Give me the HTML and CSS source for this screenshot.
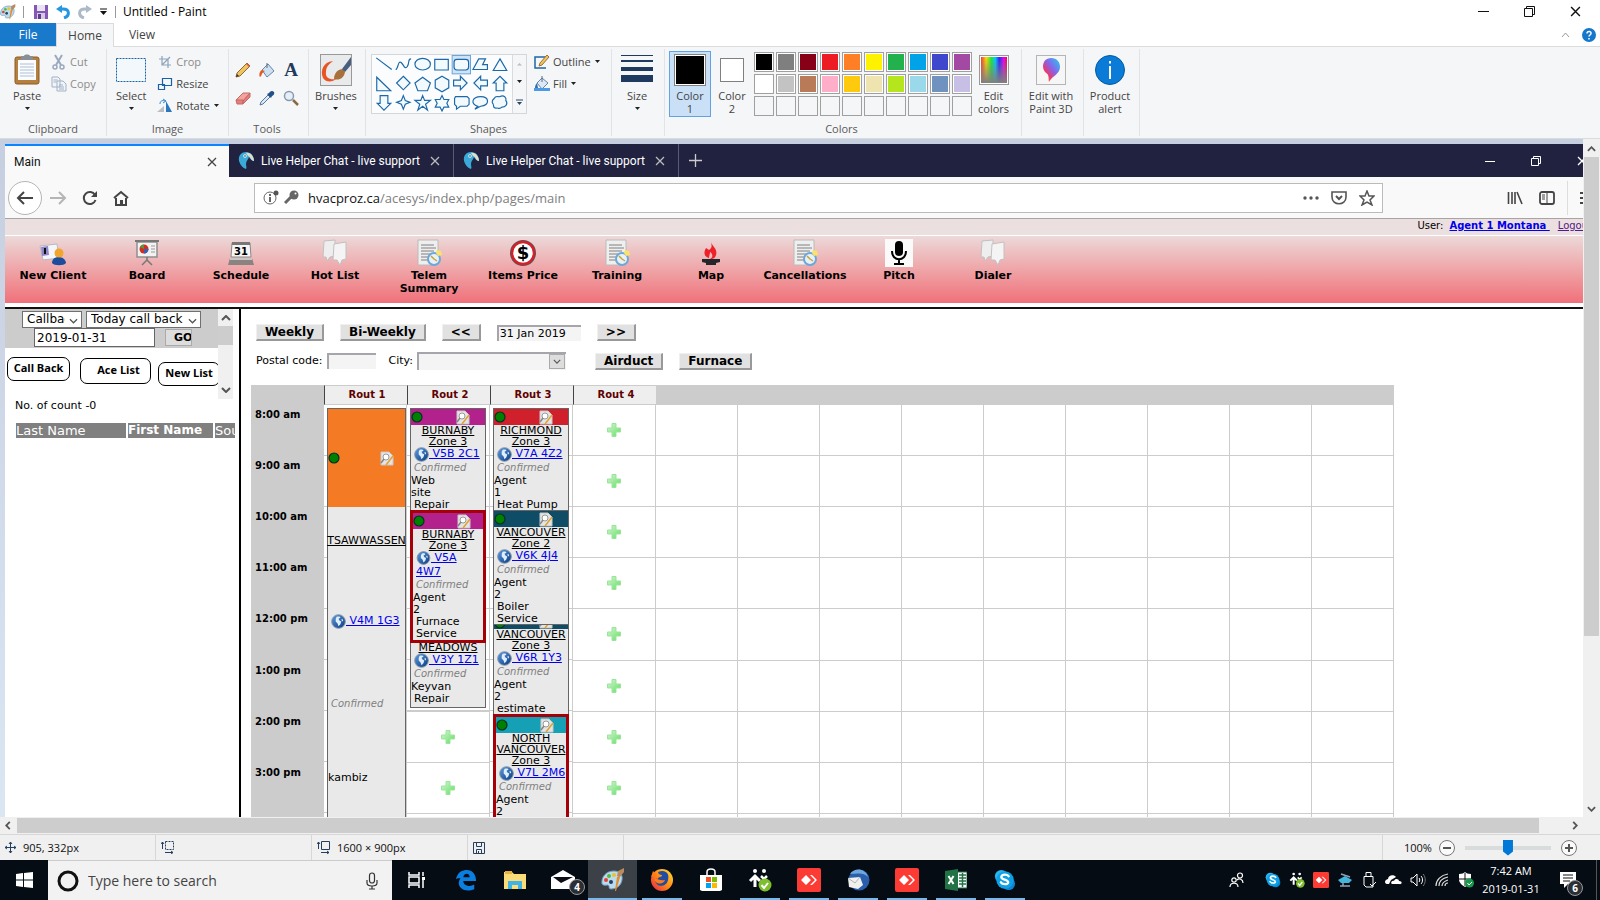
FILE: index.html
```html
<!DOCTYPE html>
<html lang="en">
<head>
<meta charset="utf-8">
<title>Untitled - Paint</title>
<link rel="stylesheet" href="styles.css">
</head>
<body>
<svg class="defs" aria-hidden="true">
  <defs>
    <linearGradient id="gGlobe" x1="0" y1="0" x2="1" y2="1"><stop offset="0" stop-color="#5b9be0"/><stop offset="1" stop-color="#0b3a80"/></linearGradient>
    <linearGradient id="gPlus" x1="0" y1="0" x2="1" y2="1"><stop offset="0" stop-color="#d5f5d5"/><stop offset="1" stop-color="#62df62"/></linearGradient>
    <linearGradient id="gRain"><stop offset="0" stop-color="#f33"/><stop offset=".2" stop-color="#fd0"/><stop offset=".4" stop-color="#1e3"/><stop offset=".55" stop-color="#0cf"/><stop offset=".7" stop-color="#22f"/><stop offset=".88" stop-color="#e0e"/><stop offset="1" stop-color="#f03"/></linearGradient>
    <linearGradient id="gFade" x1="0" y1="0" x2="0" y2="1"><stop offset="0" stop-color="#808080" stop-opacity="0"/><stop offset="1" stop-color="#808080"/></linearGradient>
    <linearGradient id="gPin" x1="1" y1="0" x2="0" y2="1"><stop offset="0" stop-color="#1fd0f5"/><stop offset=".45" stop-color="#8a62e8"/><stop offset=".7" stop-color="#e83a70"/><stop offset="1" stop-color="#ffb400"/></linearGradient>
    <linearGradient id="gFox" x1="1" y1="0" x2="0" y2="1"><stop offset="0" stop-color="#ffe13a"/><stop offset=".5" stop-color="#ff8a16"/><stop offset="1" stop-color="#e8204c"/></linearGradient>
  </defs>
  <symbol id="down" viewBox="0 0 7 4"><path d="M1 0h5L3.500 3z" fill="#222"/></symbol>
  <symbol id="chev" viewBox="0 0 10 6"><path d="M1 1l4 4 4-4" fill="none" stroke="#555" stroke-width="1.400"/></symbol>
  <symbol id="cross" viewBox="0 0 10 10"><path d="M1 1l8 8M9 1l-8 8" fill="none" stroke="currentColor" stroke-width="1.300"/></symbol>
  <symbol id="globe" viewBox="0 0 16 16"><circle cx="8" cy="8" r="7.300" fill="url(#gGlobe)" stroke="#8795aa"/><path d="M6 3c3-1 4 0 4 1L8 5l1 2 2 1-1 3-2 2-1-3-2-2 0-3zM12 5l1 2-1 1-1-2z" fill="#dfeefc"/></symbol>
  <symbol id="note" viewBox="0 0 14 15"><path d="M1 1h8l4 4v9H1z" fill="#e4e4e4" stroke="#c9c9c9"/><circle cx="6" cy="6" r="3" fill="#fff" stroke="#999"/><path d="M4 8l-3 4" stroke="#888" stroke-width="1.500"/><path d="M13 5L6 14" stroke="#e0a330" stroke-width="1.500"/></symbol>
  <symbol id="dot" viewBox="0 0 12 12"><circle cx="6" cy="6" r="5" fill="#008000" stroke="#032" stroke-width="1.200"/></symbol>
  <symbol id="plus" viewBox="0 0 14 14"><path d="M5 .5h4V5h4.500v4H9v4.500H5V9H.5V5H5z" fill="url(#gPlus)" stroke="#9be59b"/></symbol>
  <symbol id="parrot" viewBox="0 0 16 18"><path d="M1 9C0 3 4 0 8 0c5 0 8 4 8 9-2 0-4-2-5-4-1 3-3 4-3 7 0 2 1 4 0 5-3-1-6-4-7-8z" fill="#3aa9d8"/><path d="M8 1c5-1 8 4 8 8-3 0-3-4-6-5z" fill="#dedccb"/><circle cx="7" cy="4" r="1.700" fill="#fff"/><circle cx="7" cy="4" r=".8" fill="#123"/></symbol>
  <symbol id="bubbles" viewBox="0 0 28 28"><path d="M3 2l11-1v16l-5 1-3 4-1-4H2z" fill="#eee" stroke="#c4c0c0"/><path d="M13 5l12-2v17l-4 1-2 5-3-5h-4z" fill="#f4f4f4" stroke="#c4c0c0"/></symbol>
  <symbol id="doc" viewBox="0 0 28 28"><path d="M3 1h20v25H3z" fill="#efefef" stroke="#bbb"/><path d="M6 6h13M6 9h15M6 12h13M6 15h9M6 18h8M6 21h7" stroke="#a5a5a5" stroke-width="1.500"/><circle cx="19" cy="20" r="6" fill="#e6f1fa" stroke="#6fa6d8" stroke-width="2"/><path d="M19 20l-3-3M19 20l3 2" stroke="#c9a431" stroke-width="1.500"/><path d="M22 11l4 1 1 4-4 1-2-3z" fill="#fbe36a"/></symbol>
  <symbol id="palette" viewBox="0 0 24 24"><path d="M1 16C0 9 5 3 13 3c6 0 9 4 8 9-1 6-6 9-11 9-3 0-1-3-3-4-2 0-4 1-6-1z" fill="#b9dcf0" stroke="#6e9cbd"/><circle cx="5" cy="12" r="2" fill="#e4412e"/><circle cx="8" cy="8" r="2" fill="#58b83e"/><circle cx="13" cy="7" r="2" fill="#f2c025"/><circle cx="10" cy="14" r="2" fill="#23405e"/><path d="M14 23l2-14 2-1 1 1-4 14z" fill="#e8892b"/><path d="M16 8l1-5 6-3v4l-4 5z" fill="#b98b5e"/></symbol>
  <symbol id="folks" viewBox="0 0 24 24"><circle cx="7" cy="3" r="2" fill="#fff"/><circle cx="16" cy="3" r="2" fill="#fff"/><path d="M2 13l5-5 5 5M7 9v10" fill="none" stroke="#fff" stroke-width="3"/><path d="M13 8l3 3 3-3" fill="none" stroke="#fff" stroke-width="2.500"/><circle cx="17" cy="17" r="6.500" fill="#7fbf2e"/><path d="M13.500 17l2.500 3 4-5" fill="none" stroke="#fff" stroke-width="2"/></symbol>
  <symbol id="anydesk" viewBox="0 0 24 24"><rect width="24" height="24" rx="2" fill="#fb3b34"/><path d="M9 7l5 5-5 5-5-5zM13 7h2l5 5-5 5h-2l5-5z" fill="#fff"/></symbol>
  <symbol id="skype" viewBox="0 0 24 24"><circle cx="8" cy="8" r="7" fill="#2bb6f0"/><circle cx="16" cy="16" r="7" fill="#0a86d3"/><circle cx="12" cy="12" r="9.500" fill="#0fa1e6"/><path d="M16 8c-1-2-7-3-8 .5-.5 3.500 7.500 2.500 7.500 6 0 3-6.500 2.500-8 0" fill="none" stroke="#fff" stroke-width="2.500" stroke-linecap="round"/></symbol>
</svg>

<div class="paint">
  <header class="titlebar">
    <svg class="i16" viewBox="0 0 24 24"><use href="#palette"/></svg>
    <span class="bar"></span>
    <button class="ghost" aria-label="Save"><svg width="14" height="14" viewBox="0 0 14 14"><path d="M0 0h14v14H0z" fill="#8457b5"/><path d="M3 0h8v6H3z" fill="#e9e2f2"/><path d="M3 8h8v6H3z" fill="#d5c8e5"/><path d="M4 9h3v5H4z" fill="#5d3c8b"/></svg></button>
    <button class="ghost" aria-label="Undo"><svg width="14" height="14" viewBox="0 0 14 14"><path d="M3 4h4c7 0 7 7 1 9" fill="none" stroke="#2596e3" stroke-width="3"/><path d="M0 4l6-4v8z" fill="#2596e3"/></svg></button>
    <button class="ghost" aria-label="Redo"><svg width="14" height="14" viewBox="0 0 14 14"><path d="M11 4H7C0 4 0 11 6 13" fill="none" stroke="#adb9c9" stroke-width="3"/><path d="M14 4L8 0v8z" fill="#adb9c9"/></svg></button>
    <button class="ghost" aria-label="Customize toolbar"><svg width="7" height="7" viewBox="0 0 7 7"><path d="M0 1h7" stroke="#111"/><path d="M0 3h7L3.500 7z" fill="#111"/></svg></button>
    <span class="bar"></span>
    <h1>Untitled - Paint</h1>
    <div class="wincontrols">
      <button aria-label="Minimize"><svg width="11" height="11" viewBox="0 0 11 11"><path d="M0 5.500h11" stroke="#111"/></svg></button>
      <button aria-label="Restore"><svg width="11" height="11" viewBox="0 0 11 11"><path d="M.5 2.500h8v8h-8zM2.500 2.500v-2h8v8h-2" fill="none" stroke="#111"/></svg></button>
      <button aria-label="Close"><svg width="11" height="11"><use href="#cross"/></svg></button>
    </div>
  </header>

  <nav class="tabs">
    <button class="file">File</button><button class="home">Home</button><button class="view">View</button>
    <div class="tabs-end"><svg width="9" height="6" viewBox="0 0 9 6"><path d="M1 5l3.500-4L8 5" fill="none" stroke="#999"/></svg>
    <svg width="14" height="14" viewBox="0 0 14 14"><circle cx="7" cy="7" r="7" fill="#1577cc"/><path d="M5 5.500c0-3 4.500-2.500 4 0C9 7 7 7 7 8.500M7 10v1.500" fill="none" stroke="#fff" stroke-width="1.500"/></svg></div>
  </nav>

  <div class="ribbon">
    <section class="group g-clip">
      <div class="gbody">
        <button class="big"><svg width="26" height="32" viewBox="0 0 26 32"><rect x="1" y="3" width="24" height="27" rx="2" fill="#b5803f" stroke="#8a5c26"/><path d="M4 6h18v20H4z" fill="#fbfcfe"/><path d="M6 10h14M6 13h14M6 16h14M6 19h14M6 22h14" stroke="#aebfd6"/><path d="M7 2h3c0-2 6-2 6 0h3v4H7z" fill="#8a8f96"/></svg><span>Paste</span><svg class="arr"><use href="#down"/></svg></button>
        <div class="stack">
          <button class="dim"><svg width="16" height="16" viewBox="0 0 16 16"><path d="M4 1l6 10M11 1L5 11" stroke="#9aa9bf" stroke-width="2"/><circle cx="4" cy="13" r="2" fill="none" stroke="#9aa9bf" stroke-width="1.500"/><circle cx="11" cy="13" r="2" fill="none" stroke="#9aa9bf" stroke-width="1.500"/></svg>Cut</button>
          <button class="dim"><svg width="16" height="16" viewBox="0 0 16 16"><path d="M1 1h6l2 2v8H1zM6 5h6l3 3v7H6z" fill="#f1f4f8" stroke="#a3b1c6"/><path d="M2.500 4h4M2.500 6h3M8 9h4M8 11h5M8 13h5" stroke="#a3b1c6"/></svg>Copy</button>
        </div>
      </div><h2>Clipboard</h2>
    </section>
    <section class="group g-image">
      <div class="gbody">
        <button class="big"><svg width="32" height="32" viewBox="0 0 32 32"><rect x="1.500" y="4.500" width="29" height="23" fill="#f3f8fd" stroke="#1a62a8" stroke-dasharray="2 1"/></svg><span>Select</span><svg class="arr"><use href="#down"/></svg></button>
        <div class="stack">
          <button class="dim"><svg width="16" height="16" viewBox="0 0 16 16"><path d="M5 2v9h9M2 5h9v9M5 11l8-8" fill="none" stroke="#8fa3bd" stroke-width="1.200"/></svg>Crop</button>
          <button><svg width="16" height="16" viewBox="0 0 16 16"><path d="M5.500 2.500h9v7h-9zM1.500 8.500h6v5h-6z" fill="#f3f8fd" stroke="#1a62a8" stroke-width="1.200"/></svg>Resize</button>
          <button><svg width="16" height="16" viewBox="0 0 16 16"><path d="M0 14h7V8z" fill="#b9bec5"/><path d="M9 3l6 11H9z" fill="#2877c0"/><path d="M3 6c0-3 2-4 5-3M6 1l3 2-3 2" fill="none" stroke="#2e8ad8"/></svg>Rotate<svg class="arr"><use href="#down"/></svg></button>
        </div>
      </div><h2>Image</h2>
    </section>
    <section class="group g-tools">
      <div class="gbody tools">
        <button aria-label="Pencil"><svg class="i16" viewBox="0 0 16 16"><path d="M1 15l1-4L12 1l3 3L5 14z" fill="#f0c45c" stroke="#8d6a3a"/><path d="M11 2l3 3 1-1-3-3z" fill="#d8574a"/><path d="M1 15l1-3 2 2z" fill="#333"/></svg></button>
        <button aria-label="Fill with color"><svg class="i16" viewBox="0 0 16 16"><path d="M3 8l6-6 6 7-7 6z" fill="#cfe0f0" stroke="#6386a8"/><path d="M8 6V1" stroke="#5a6d80"/><path d="M3 8c-3 1-3 6-2 7 2-1 1-4 5-6z" fill="#e65b22"/></svg></button>
        <button aria-label="Text"><b class="letter">A</b></button>
        <button aria-label="Eraser"><svg class="i16" viewBox="0 0 16 16"><path d="M1 10l7-7h7l-7 8z" fill="#f2a39e" stroke="#c56a68"/><path d="M1 10h7v4H2zM8 11l7-8v4l-7 7z" fill="#e47f7b" stroke="#c56a68"/></svg></button>
        <button aria-label="Color picker"><svg class="i16" viewBox="0 0 16 16"><path d="M1 15l1-3 7-7 2 2-7 7z" fill="#dce9f5" stroke="#56799a"/><path d="M8 4l4 4 1-2c3-1 3-5 0-5-2 0-2 1-3 2z" fill="#244f88"/></svg></button>
        <button aria-label="Magnifier"><svg class="i16" viewBox="0 0 16 16"><circle cx="6" cy="6" r="4.500" fill="#e3f0fb" stroke="#8c99a8" stroke-width="1.500"/><path d="M10 10l5 5" stroke="#8a6a45" stroke-width="2.500"/></svg></button>
      </div><h2>Tools</h2>
    </section>
    <section class="group g-brush">
      <div class="gbody"><button class="big"><svg width="32" height="32" viewBox="0 0 32 32"><rect x=".5" y=".5" width="31" height="31" fill="#e9eaec" stroke="#999"/><path d="M13 7C3 8 0 17 3 24c3 5 10 4 13 1-6 1-11-1-10-7 0-5 3-8 7-11z" fill="#e85423"/><path d="M14 25c0-6 4-10 9-10l2 3c-1 6-6 9-11 7z" fill="#a8713b"/><path d="M22 15l9-12v8l-6 7z" fill="#4a5f7d"/></svg><span>Brushes</span><svg class="arr"><use href="#down"/></svg></button></div>
    </section>
    <section class="group g-shapes">
      <div class="gbody">
        <div class="gallery">
          <svg class="shapes" viewBox="0 0 140 60" fill="#f3fafd" stroke="#1c68a8" stroke-width="1.200">
            <rect x="80.500" y=".5" width="19" height="19" fill="#cfe3f8" stroke="#68a2dc" stroke-width="1"/>
            <path d="M2 3l16 12" fill="none"/><path d="M22 15c3 0 2-10 6-7 3 3 3 7 6 4 3-4 0-8 4-8" fill="none"/><ellipse cx="50" cy="9.500" rx="8" ry="6"/><path d="M62.500 4.500h14v11h-14z"/><rect x="82.500" y="4.500" width="15" height="11" rx="3"/><path d="M102 15l6-11h7l-3 6h5v5z"/><path d="M130 4l7 12h-14z"/>
            <path d="M2.500 23v14H17z"/><path d="M30 22l7 7-7 7-7-7z"/><path d="M50 23l8 6-3 8h-10l-3-8z"/><path d="M70 22l7 4v8l-7 4-7-4v-8z"/><path d="M82 26h7v-4l7 7-7 7v-4h-7z"/><path d="M117 26h-7v-4l-7 7 7 7v-4h7z"/><path d="M126 37v-8h-3l7-7 7 7h-3v8z"/>
            <path d="M6 42v8H3l7 7 7-7h-3v-8z"/><path d="M30 42l2 5 5 2-5 2-2 5-2-5-5-2 5-2z"/><path d="M50 42l2 5h6l-5 4 2 6-5-4-5 4 2-6-5-4h6z"/><path d="M70 42l2 4h5l-2 4 2 4h-5l-2 4-2-4h-5l2-4-2-4h5z"/><path d="M84 43h12l2 2v6l-2 2h-7l-4 3v-3l-2-2v-6z"/><path d="M107 53c-8-2-6-10 3-10s10 9 0 10l-6 3z"/><path d="M124 45c2-4 4-1 6-2 4-2 7 1 6 4 3 4-1 7-4 7-3 3-4 0-6 1-4 0-2-3-3-4-2-3-1-4 1-6z"/>
          </svg>
          <div class="gscroll"><svg width="7" height="4" viewBox="0 0 7 4"><path d="M1 3.500h5L3.500 1z" fill="#bbb"/></svg><svg width="7" height="4"><use href="#down"/></svg><svg width="7" height="7" viewBox="0 0 7 7"><path d="M0 1h7" stroke="#2b4564"/><path d="M1 3h5L3.500 6z" fill="#2b4564"/></svg></div>
        </div>
        <div class="stack">
          <button><svg width="16" height="16" viewBox="0 0 16 16"><path d="M12 3H1v11h11" fill="none" stroke="#1c68a8" stroke-width="1.500"/><path d="M5 12l1-3 7-8 2 2-7 8z" fill="#f0c45c" stroke="#a06f38"/></svg>Outline<svg class="arr"><use href="#down"/></svg></button>
          <button><svg width="16" height="16" viewBox="0 0 16 16"><path d="M3 7l5-5 6 5-6 6z" fill="#dce9f5" stroke="#6386a8"/><path d="M0 12h16v3H0z" fill="#4b9ae4"/><path d="M8 6V0" stroke="#5a6d80"/><path d="M3 7c-2 2-2 4-2 5h3z" fill="#2f6fb0"/></svg>Fill<svg class="arr"><use href="#down"/></svg></button>
        </div>
      </div><h2>Shapes</h2>
    </section>
    <section class="group g-size">
      <div class="gbody"><button class="big"><svg width="32" height="32" viewBox="0 0 32 32" fill="#1e3a5f"><path d="M0 1h32v1H0zM0 6h32v2H0zM0 13h32v4H0zM0 21h32v7H0z"/></svg><span>Size</span><svg class="arr"><use href="#down"/></svg></button></div>
    </section>
    <section class="group g-colors">
      <div class="gbody">
        <button class="color sel"><i class="c1"></i><span>Color<br>1</span></button>
        <button class="color"><i class="c2"></i><span>Color<br>2</span></button>
        <div class="pal">
          <button aria-label="Black" class="k1"></button><button aria-label="Gray" class="k2"></button><button aria-label="Dark red" class="k3"></button><button aria-label="Red" class="k4"></button><button aria-label="Orange" class="k5"></button><button aria-label="Yellow" class="k6"></button><button aria-label="Green" class="k7"></button><button aria-label="Turquoise" class="k8"></button><button aria-label="Indigo" class="k9"></button><button aria-label="Purple" class="k10"></button>
          <button aria-label="White" class="k11"></button><button aria-label="Light gray" class="k12"></button><button aria-label="Brown" class="k13"></button><button aria-label="Rose" class="k14"></button><button aria-label="Gold" class="k15"></button><button aria-label="Light yellow" class="k16"></button><button aria-label="Lime" class="k17"></button><button aria-label="Light turquoise" class="k18"></button><button aria-label="Blue gray" class="k19"></button><button aria-label="Lavender" class="k20"></button>
          <button aria-label="Empty"></button><button aria-label="Empty"></button><button aria-label="Empty"></button><button aria-label="Empty"></button><button aria-label="Empty"></button><button aria-label="Empty"></button><button aria-label="Empty"></button><button aria-label="Empty"></button><button aria-label="Empty"></button><button aria-label="Empty"></button>
        </div>
        <button class="big edit"><svg width="30" height="32" viewBox="0 0 30 32"><rect x=".5" y="1.500" width="29" height="29" fill="#fff" stroke="#999"/><path d="M2 3h26v26H2z" fill="url(#gRain)"/><path d="M2 3h26v26H2z" fill="url(#gFade)"/></svg><span>Edit<br>colors</span></button>
      </div><h2>Colors</h2>
    </section>
    <section class="group g-3d">
      <div class="gbody"><button class="big"><svg width="30" height="32" viewBox="0 0 30 32"><rect x=".5" y="1.500" width="29" height="29" fill="#f6f6f6" stroke="#b5b5b5"/><path d="M15 4c6 0 9 4 9 9 0 7-8 9-11 15-1-4 1-7-4-10C5 13 7 4 15 4z" fill="url(#gPin)"/></svg><span>Edit with<br>Paint 3D</span></button></div>
    </section>
    <section class="group g-alert">
      <div class="gbody"><button class="big"><svg width="30" height="32" viewBox="0 0 30 32"><circle cx="15" cy="16" r="14.500" fill="#0a7bd6" stroke="#075a9e"/><path d="M15 12v13M15 7v2.500" stroke="#fff" stroke-width="2"/></svg><span>Product<br>alert</span></button></div>
    </section>
  </div>

  <div class="work">
    <div class="shot">
      <div class="fftabs">
        <div class="fftab on"><span>Main</span><button aria-label="Close tab"><svg width="10" height="10"><use href="#cross"/></svg></button></div>
        <div class="fftab"><svg width="16" height="18"><use href="#parrot"/></svg><span>Live Helper Chat - live support</span><button aria-label="Close tab"><svg width="10" height="10"><use href="#cross"/></svg></button></div>
        <div class="fftab"><svg width="16" height="18"><use href="#parrot"/></svg><span>Live Helper Chat - live support</span><button aria-label="Close tab"><svg width="10" height="10"><use href="#cross"/></svg></button></div>
        <button class="newtab" aria-label="New tab"><svg width="13" height="13" viewBox="0 0 13 13"><path d="M6.500 0v13M0 6.500h13" stroke="#ccc" stroke-width="1.300"/></svg></button>
        <div class="ffwin">
          <button aria-label="Minimize"><svg width="10" height="10" viewBox="0 0 10 10"><path d="M0 5.500h10" stroke="#fff"/></svg></button>
          <button aria-label="Restore"><svg width="10" height="10" viewBox="0 0 10 10"><path d="M.5 2.500h7v7h-7zM2.500 2.500v-2h7v7h-2" fill="none" stroke="#fff"/></svg></button>
          <button aria-label="Close"><svg width="10" height="10"><use href="#cross"/></svg></button>
        </div>
      </div>
      <div class="ffbar">
        <button class="back" aria-label="Back"><svg width="18" height="14" viewBox="0 0 18 14"><path d="M8 1L2 7l6 6M2 7h15" fill="none" stroke="#444" stroke-width="2"/></svg></button>
        <button aria-label="Forward"><svg width="18" height="14" viewBox="0 0 18 14"><path d="M10 1l6 6-6 6M16 7H1" fill="none" stroke="#b5b5b5" stroke-width="2"/></svg></button>
        <button aria-label="Reload"><svg width="16" height="16" viewBox="0 0 16 16"><path d="M13 5a6 6 0 1 0 .5 5" fill="none" stroke="#444" stroke-width="2"/><path d="M15 1v6H9z" fill="#444"/></svg></button>
        <button aria-label="Home"><svg width="16" height="16" viewBox="0 0 16 16"><path d="M1 8l7-6 7 6M3 8v7h10V8" fill="none" stroke="#444" stroke-width="2"/><path d="M7 10h3v5H7z" fill="#444"/></svg></button>
        <div class="url">
          <svg width="16" height="16" viewBox="0 0 16 16"><circle cx="7" cy="8" r="6" fill="none" stroke="#666"/><path d="M7 7v5M7 4v2" stroke="#666" stroke-width="2"/><circle cx="13" cy="3" r="2.500" fill="#555"/></svg>
          <svg width="15" height="15" viewBox="0 0 15 15"><circle cx="10" cy="5" r="4.500" fill="#666"/><path d="M8 6l-7 7" stroke="#666" stroke-width="3"/><circle cx="11.500" cy="3.500" r="1" fill="#fff"/></svg>
          <a href="#main">hvacproz.ca<span>/acesys/index.php/pages/main</span></a>
          <svg width="16" height="16" viewBox="0 0 16 16" fill="#555"><circle cx="2" cy="8" r="1.700"/><circle cx="8" cy="8" r="1.700"/><circle cx="14" cy="8" r="1.700"/></svg>
          <svg width="16" height="16" viewBox="0 0 16 16"><path d="M1 2h14v5c0 9-14 9-14 0z" fill="none" stroke="#555" stroke-width="1.600"/><path d="M5 6l3 3 3-3" fill="none" stroke="#555" stroke-width="2"/></svg>
          <svg width="16" height="16" viewBox="0 0 16 16"><path d="M8 1l2 5h5l-4 4 2 5-5-3-5 3 2-5-4-4h5z" fill="none" stroke="#555" stroke-width="1.500"/></svg>
        </div>
        <div class="fftools">
          <svg width="16" height="16" viewBox="0 0 16 16"><path d="M1.500 2v12M5 2v12M8 2v12M10 2l5 12" fill="none" stroke="#444" stroke-width="1.600"/></svg>
          <svg width="16" height="16" viewBox="0 0 16 16"><rect x="1" y="2" width="14" height="12" rx="2" fill="none" stroke="#444" stroke-width="1.800"/><path d="M8 2v12M3 5h3M3 7h3M3 9h3" stroke="#444"/></svg>
          <span class="sep"></span>
          <svg class="menu" width="3" height="16" viewBox="0 0 3 16"><path d="M0 3h3M0 8h3M0 13h3" stroke="#444" stroke-width="2"/></svg>
        </div>
      </div>

      <div class="userbar"><span>User:</span><a class="agent" href="#agent">Agent 1 Montana&nbsp;</a><a class="logout" href="#logout">Logout</a></div>
      <nav class="appnav">
        <a href="#a"><svg viewBox="0 0 28 28"><path d="M1 7l17-2 2 14-16 2z" fill="#f4f6fa" stroke="#b5b9c3"/><path d="M2 8l7-1 1 9-7 1z" fill="#8e86c9"/><path d="M6 9v6" stroke="#111" stroke-width="2"/><path d="M13 24c0-8 13-8 14 0-2 3-12 3-14 0z" fill="#1b4d9c"/><circle cx="20" cy="14" r="4.500" fill="#f2a52c"/></svg>New Client</a>
        <a href="#a"><svg viewBox="0 0 28 28"><path d="M4 3h20v15H4z" fill="#f2f2f2" stroke="#8f8f8f" stroke-width="1.500"/><path d="M2 2h24" stroke="#777" stroke-width="2"/><circle cx="11" cy="10" r="4.500" fill="#d82b20"/><path d="M11 10h4.500a4.500 4.500 0 0 1-4.500 4.500z" fill="#2d63b8"/><path d="M11 10V5.500A4.500 4.500 0 0 0 7 8z" fill="#4b9c3a"/><path d="M18 7h4M18 10h4M18 13h4" stroke="#999"/><path d="M14 18v4M14 21l-5 5M14 21l5 5" stroke="#777" stroke-width="1.500"/></svg>Board</a>
        <a href="#a"><svg viewBox="0 0 28 28"><path d="M5 4h18l1 14H4z" fill="#f6f6f6" stroke="#888"/><path d="M5 3h18v3H5z" fill="#777"/><path d="M3 19h22l2 7H1z" fill="#8a8380"/><path d="M3 19h22v2H3z" fill="#c9c5c3"/><text x="14" y="16" text-anchor="middle" class="cal">31</text></svg>Schedule</a>
        <a href="#a"><svg><use href="#bubbles"/></svg>Hot List</a>
        <a href="#a"><svg><use href="#doc"/></svg>Telem Summary</a>
        <a href="#a"><svg viewBox="0 0 28 28"><circle cx="14" cy="14" r="11" fill="#fff" stroke="#555" stroke-width="4"/><circle cx="14" cy="14" r="11" fill="#fff" stroke="#d3202a" stroke-width="2.500"/><text x="14" y="20" text-anchor="middle" class="dollar">$</text></svg>Items Price</a>
        <a href="#a"><svg><use href="#doc"/></svg>Training</a>
        <a href="#a"><svg viewBox="0 0 28 28"><path d="M14 3c1 4 7 7 5 13-1 4-4 4-6 4 4-2 2-6 0-7 0 3-1 3-1 6-6-2-5-6-3-10l3 2c3-2 3-4 2-8z" fill="#ee202a"/><path d="M5 20h18v3l-4 1v2H9v-2l-4-1z" fill="#24262b"/></svg>Map</a>
        <a href="#a"><svg><use href="#doc"/></svg>Cancellations</a>
        <a href="#a"><svg viewBox="0 0 28 28"><path d="M0 0h28v28H0z" fill="#fafafa"/><rect x="10" y="2" width="8" height="15" rx="4"/><path d="M7 12c0 11 14 11 14 0M14 20v5M9 25h10" fill="none" stroke="#000" stroke-width="2"/></svg>Pitch</a>
        <a href="#a"><svg><use href="#bubbles"/></svg>Dialer</a>
      </nav>

      <div class="app" id="main">
        <aside class="side">
          <div class="filters">
            <div class="fbox">
              <div class="frow">
                <span class="selwrap"><select class="s1" aria-label="List type"><option>Callback</option></select><svg width="9" height="6"><use href="#chev"/></svg></span>
                <span class="selwrap"><select class="s2" aria-label="Callback period"><option>Today call back</option></select><svg width="9" height="6"><use href="#chev"/></svg></span>
              </div>
              <div class="frow"><input class="fdate" aria-label="Callback date" value="2019-01-31"><button class="go">GO</button></div>
              <div class="lists"><button class="l1">Call Back</button><button class="l2">Ace List</button><button class="l3">New List</button></div>
            </div>
            <div class="fscroll"><svg width="10" height="6" viewBox="0 0 10 6"><path d="M1 5l4-4 4 4" fill="none" stroke="#555" stroke-width="2"/></svg><i></i><svg class="end" width="10" height="6" viewBox="0 0 10 6"><path d="M1 1l4 4 4-4" fill="none" stroke="#555" stroke-width="2"/></svg></div>
          </div>
          <p>No. of count -0</p>
          <div class="names"><table><tr><th class="n1">Last Name</th><th class="n2">First Name</th><th class="n3">Source</th></tr></table></div>
        </aside>

        <main>
          <div class="ctl">
            <button>Weekly</button><button>Bi-Weekly</button><button>&lt;&lt;</button><input class="day" aria-label="Day" value="31 Jan 2019"><button>&gt;&gt;</button>
          </div>
          <div class="ctl two">
            <label for="pc">Postal code:</label><input id="pc" class="pc">
            <label for="city" class="lc">City:</label><span class="selwrap city"><select id="city"><option></option></select><svg width="9" height="6"><use href="#chev"/></svg></span>
            <button class="air">Airduct</button><button>Furnace</button>
          </div>
          <table class="sched">
            <colgroup><col class="ct"><col class="cr"><col class="cr"><col class="cr"><col class="cr"><col><col><col><col><col><col><col><col><col></colgroup>
            <thead><tr><td></td><th>Rout 1</th><th>Rout 2</th><th>Rout 3</th><th>Rout 4</th><td colspan="9"></td></tr></thead>
            <tbody>
              <tr><th>8:00 am</th>
                <td rowspan="9" class="rt r1"><div class="card long">
                  <div class="hd orange"><svg class="dot"><use href="#dot"/></svg><svg class="note"><use href="#note"/></svg></div>
                  <u class="c">TSAWWASSEN</u><div class="pcode"><svg class="gl"><use href="#globe"/></svg><a href="#p">&nbsp;V4M 1G3</a></div><em>Confirmed</em><p>kambiz</p></div></td>
                <td rowspan="6" class="rt">
                  <div class="card"><div class="hd mag"><svg class="dot"><use href="#dot"/></svg><svg class="note"><use href="#note"/></svg></div><u class="c">BURNABY</u><u class="c">Zone 3</u><div class="pcode"><svg class="gl"><use href="#globe"/></svg><a href="#p">&nbsp;V5B 2C1</a></div><em>Confirmed</em><p>Web</p><p>site</p><p class="in">Repair</p></div>
                  <div class="card red"><div class="hd mag"><svg class="dot"><use href="#dot"/></svg><svg class="note"><use href="#note"/></svg></div><u class="c">BURNABY</u><u class="c">Zone 3</u><div class="pcode wrap"><svg class="gl"><use href="#globe"/></svg><a href="#p">&nbsp;V5A<br>4W7</a></div><em>Confirmed</em><p>Agent</p><p>2</p><p class="in">Furnace</p><p class="in">Service</p></div>
                  <div class="card last"><u class="c">MEADOWS</u><div class="pcode"><svg class="gl"><use href="#globe"/></svg><a href="#p">&nbsp;V3Y 1Z1</a></div><em>Confirmed</em><p>Keyvan</p><p class="in">Repair</p></div>
                </td>
                <td rowspan="9" class="rt">
                  <div class="card"><div class="hd crim"><svg class="dot"><use href="#dot"/></svg><svg class="note"><use href="#note"/></svg></div><u class="c">RICHMOND</u><u class="c">Zone 3</u><div class="pcode"><svg class="gl"><use href="#globe"/></svg><a href="#p">&nbsp;V7A 4Z2</a></div><em>Confirmed</em><p>Agent</p><p>1</p><p class="in">Heat Pump</p></div>
                  <div class="card"><div class="hd navy"><svg class="dot"><use href="#dot"/></svg><svg class="note"><use href="#note"/></svg></div><u class="c">VANCOUVER</u><u class="c">Zone 2</u><div class="pcode"><svg class="gl"><use href="#globe"/></svg><a href="#p">&nbsp;V6K 4J4</a></div><em>Confirmed</em><p>Agent</p><p>2</p><p class="in">Boiler</p><p class="in">Service</p></div>
                  <div class="card"><div class="hd navy cut"><svg class="dot"><use href="#dot"/></svg><svg class="note"><use href="#note"/></svg></div><u class="c">VANCOUVER</u><u class="c">Zone 3</u><div class="pcode"><svg class="gl"><use href="#globe"/></svg><a href="#p">&nbsp;V6R 1Y3</a></div><em>Confirmed</em><p>Agent</p><p>2</p><p class="in">estimate</p></div>
                  <div class="card red"><div class="hd teal"><svg class="dot"><use href="#dot"/></svg><svg class="note"><use href="#note"/></svg></div><u class="c">NORTH</u><u class="c">VANCOUVER</u><u class="c">Zone 3</u><div class="pcode"><svg class="gl"><use href="#globe"/></svg><a href="#p">&nbsp;V7L 2M6</a></div><em>Confirmed</em><p>Agent</p><p>2</p></div>
                </td>
                <td class="add"><svg><use href="#plus"/></svg></td><td></td><td></td><td></td><td></td><td></td><td></td><td></td><td></td><td></td></tr>
              <tr><th>9:00 am</th><td class="add"><svg><use href="#plus"/></svg></td><td></td><td></td><td></td><td></td><td></td><td></td><td></td><td></td><td></td></tr>
              <tr><th>10:00 am</th><td class="add"><svg><use href="#plus"/></svg></td><td></td><td></td><td></td><td></td><td></td><td></td><td></td><td></td><td></td></tr>
              <tr><th>11:00 am</th><td class="add"><svg><use href="#plus"/></svg></td><td></td><td></td><td></td><td></td><td></td><td></td><td></td><td></td><td></td></tr>
              <tr><th>12:00 pm</th><td class="add"><svg><use href="#plus"/></svg></td><td></td><td></td><td></td><td></td><td></td><td></td><td></td><td></td><td></td></tr>
              <tr><th>1:00 pm</th><td class="add"><svg><use href="#plus"/></svg></td><td></td><td></td><td></td><td></td><td></td><td></td><td></td><td></td><td></td></tr>
              <tr><th>2:00 pm</th><td class="add"><svg><use href="#plus"/></svg></td><td class="add"><svg><use href="#plus"/></svg></td><td></td><td></td><td></td><td></td><td></td><td></td><td></td><td></td><td></td></tr>
              <tr><th>3:00 pm</th><td class="add"><svg><use href="#plus"/></svg></td><td class="add"><svg><use href="#plus"/></svg></td><td></td><td></td><td></td><td></td><td></td><td></td><td></td><td></td><td></td></tr>
              <tr><th></th><td></td><td></td><td></td><td></td><td></td><td></td><td></td><td></td><td></td><td></td><td></td></tr>
            </tbody>
          </table>
        </main>
      </div>
    </div>
    <div class="vscroll"><svg width="9" height="6" viewBox="0 0 10 6"><path d="M1 5l4-4 4 4" fill="none" stroke="#555" stroke-width="2"/></svg><i></i><svg class="end" width="9" height="6" viewBox="0 0 10 6"><path d="M1 1l4 4 4-4" fill="none" stroke="#555" stroke-width="2"/></svg></div>
  </div>
  <div class="hscroll"><svg width="6" height="9" viewBox="0 0 6 10"><path d="M5 1L1 5l4 4" fill="none" stroke="#555" stroke-width="2"/></svg><i></i><svg width="6" height="9" viewBox="0 0 6 10"><path d="M1 1l4 4-4 4" fill="none" stroke="#555" stroke-width="2"/></svg></div>

  <footer class="status">
    <div><svg width="11" height="11" viewBox="0 0 11 11"><path d="M5.500 0v11M0 5.500h11M4 2l1.500-2L7 2M4 9l1.500 2L7 9M2 4L0 5.500 2 7M9 4l2 1.500L9 7" fill="none" stroke="#25405f"/></svg>905, 332px</div>
    <div><svg width="13" height="13" viewBox="0 0 13 13" fill="none" stroke="#25405f"><path d="M4.500.5h8v8h-8z" stroke-dasharray="2 1"/><path d="M1.500 8V1M0 3l1.500-2L3 3M4 11.500h8M10 10l2 1.500L10 13"/></svg></div>
    <div><svg width="13" height="13" viewBox="0 0 13 13" fill="none" stroke="#25405f"><path d="M4.500.5h8v8h-8zM1.500 8V1M0 3l1.500-2L3 3M4 11.500h8M10 10l2 1.500L10 13"/></svg>1600 × 900px</div>
    <div><svg width="12" height="12" viewBox="0 0 12 12" fill="none" stroke="#25405f"><path d="M.5.500h11v11H.5zM3.500.5v4h5v-4M3.500 11.500v-4h5v4M5.500 9v2"/></svg></div>
    <div class="zoom"><label for="zm">100%</label><button aria-label="Zoom out"><svg width="10" height="10" viewBox="0 0 10 10"><path d="M1 5h8" stroke="#555" stroke-width="2"/></svg></button><input id="zm" type="range" min="0" max="100" value="50"><button aria-label="Zoom in"><svg width="10" height="10" viewBox="0 0 10 10"><path d="M1 5h8M5 1v8" stroke="#555" stroke-width="2"/></svg></button></div>
  </footer>
</div>

<div class="taskbar">
  <button class="start" aria-label="Start"><svg width="17" height="16" viewBox="0 0 17 16" fill="#fff"><path d="M0 2l7-1v6.500H0zM8 1l9-1v7.500H8zM0 8.500h7V15l-7-1zM8 8.500h9V16l-9-1z"/></svg></button>
  <div class="search"><svg width="22" height="22" viewBox="0 0 22 22"><circle cx="11" cy="11" r="9" fill="none" stroke="#111" stroke-width="3"/></svg><input aria-label="Search" placeholder="Type here to search"><svg width="12" height="18" viewBox="0 0 12 18" fill="none" stroke="#333" stroke-width="1.200"><rect x="3.500" y="1" width="5" height="10" rx="2.500"/><path d="M1 8v3c0 4 10 4 10 0V8M6 14v3M3 17h6"/></svg></div>
  <div class="apps">
    <button aria-label="Task view"><svg width="18" height="16" viewBox="0 0 18 16" fill="none" stroke="#fff" stroke-width="1.500"><path d="M1 0v3h10V0M1 5h10v6H1zM1 16v-3h10v3M15 0v4M15 6v10"/><path d="M14 5h3v3h-3z" fill="#fff" stroke="none"/></svg></button>
    <button aria-label="Edge"><svg width="22" height="22" viewBox="0 0 24 24"><path d="M1 11C3 3 8 1 13 1c6 0 10 5 10 12H9c0 5 7 7 12 4v5C9 27 0 18 6 10c-2 0-4 0-5 1zm8-2h7c0-5-6-5-7 0z" fill="#0b7fe0"/></svg></button>
    <button aria-label="File Explorer"><svg width="22" height="20" viewBox="0 0 22 20"><path d="M0 2h8l2 2h12v15H0z" fill="#fbdc78"/><path d="M1 1h7v3H1z" fill="#e7b23e"/><path d="M4 19v-8h14v8h-4v-4H8v4z" fill="#3fb4e8"/></svg></button>
    <button aria-label="Mail"><svg width="26" height="22" viewBox="0 0 26 22"><path d="M0 8l12-7 12 7v12H0z" fill="#fff"/><path d="M2 8h20L10 14z" fill="#0a0e14"/></svg><b class="badge">4</b></button>
    <button aria-label="Paint" class="cur run"><svg width="24" height="24"><use href="#palette"/></svg></button>
    <button aria-label="Firefox" class="run"><svg width="24" height="24" viewBox="0 0 24 24"><circle cx="12" cy="12" r="11" fill="url(#gFox)"/><path d="M8 4c7-3 12 1 10 8-1 6-9 8-12 3-2-4 0-5 2-4 0-3 4-1 4-4-2 0-4-1-4-3z" fill="#234b9f"/><path d="M5 10c3 1 5 3 10 2-1 4-7 5-10 1zM1 9l2-6 4 4z" fill="#ff7b18"/></svg></button>
    <button aria-label="Store"><svg width="24" height="24" viewBox="0 0 24 24"><path d="M8 7V4c0-4 8-4 8 0v3" fill="none" stroke="#fff" stroke-width="1.500"/><path d="M1 7h22v15l-2 1H3l-2-1z" fill="#fff"/><path d="M7 9h5v5H7z" fill="#f04e23"/><path d="M13 9h5v5h-5z" fill="#7fba00"/><path d="M7 15h5v5H7z" fill="#00a3ee"/><path d="M13 15h5v5h-5z" fill="#ffb800"/></svg></button>
    <button aria-label="Contacts" class="run"><svg width="24" height="24"><use href="#folks"/></svg></button>
    <button aria-label="AnyDesk" class="run"><svg width="24" height="24"><use href="#anydesk"/></svg></button>
    <button aria-label="Thunderbird" class="run"><svg width="24" height="24" viewBox="0 0 24 24"><circle cx="13" cy="12" r="10.500" fill="#2a5fae"/><path d="M4 6c4-7 16-6 18 3-5-5-10-3-18-3z" fill="#6ea7dc"/><path d="M2 10l12-1 3 8-5 4-9-2z" fill="#f0f0ec"/><path d="M2 10l7 5 5-6" fill="none" stroke="#b5b5b0"/></svg></button>
    <button aria-label="AnyDesk session" class="run"><svg width="24" height="24"><use href="#anydesk"/></svg></button>
    <button aria-label="Excel" class="run"><svg width="22" height="22" viewBox="0 0 22 22"><path d="M10 3h12v16H10z" fill="#fff" stroke="#217346"/><path d="M14 6h7M14 9h7M14 12h7M14 15h7M17.500 4v14" stroke="#217346" stroke-width="1.500"/><path d="M0 2l13-2v22L0 20z" fill="#217346"/><path d="M3.500 7l5 8M8.500 7l-5 8" stroke="#fff" stroke-width="2"/></svg></button>
    <button aria-label="Skype" class="run"><svg width="22" height="22"><use href="#skype"/></svg></button>
  </div>
  <div class="tray">
    <svg class="ppl" width="16" height="16" viewBox="0 0 16 16" fill="none" stroke="#fff" stroke-width="1.200"><circle cx="5" cy="8" r="2.200"/><path d="M1 15c0-5 8-5 8 0"/><circle cx="11" cy="3.500" r="2.500"/><path d="M8 8c2-2 6-1 6 3"/></svg>
    <svg width="16" height="16"><use href="#skype"/></svg>
    <svg width="16" height="16"><use href="#folks"/></svg>
    <svg width="16" height="16"><use href="#anydesk"/></svg>
    <svg width="16" height="16" viewBox="0 0 16 16"><path d="M1 8l7-4 7 4-3 3H4z" fill="#45b5dc"/><path d="M4 2l9 3M3 14h10M6 11v3" stroke="#8fa3b5" stroke-width="1.500"/></svg>
    <svg width="16" height="16" viewBox="0 0 16 16" fill="none" stroke="#fff"><path d="M5 4V.500h5V4M3 4.500h9V15H5l-2-2zM9 12l2 2 4-4"/></svg>
    <svg width="17" height="16" viewBox="0 0 17 16" fill="#fff"><path d="M3 12c-4 0-4-4 0-5 0-4 6-5 8-2l-5 3-2 4zM7 12c-2-1 0-4 2-3 1-3 5-2 5 0 4 0 3 4 0 3z"/></svg>
    <svg width="16" height="16" viewBox="0 0 16 16" fill="none" stroke="#fff"><path d="M1 6h2l4-4v12L3 10H1zM9 6c1 1 1 3 0 4M11 4c2 2 2 6 0 8"/><path d="M13 2c3 3 3 9 0 12" stroke="#777"/></svg>
    <svg width="16" height="16" viewBox="0 0 16 16" fill="none" stroke="#ddd" stroke-width="1.200"><path d="M2 14C2 8 7 3 14 2M5 14c0-5 4-8 9-9M8 14c0-3 3-5 6-6M11 14c0-2 1-3 3-3"/></svg>
    <svg width="16" height="16" viewBox="0 0 16 16"><path d="M1 2c3 0 5-1 6-2 1 1 3 2 6 2v5c0 4-3 6-6 8-3-2-6-4-6-8z" fill="#fff"/><path d="M7 1v13M1 7h12" stroke="#111"/><circle cx="11.500" cy="11" r="4.500" fill="#179a4b"/><path d="M9.500 11l1.500 2 3-3" fill="none" stroke="#fff"/></svg>
    <div class="clock"><span>7:42 AM</span><span>2019-01-31</span></div>
    <button class="action" aria-label="Notifications"><svg width="18" height="18" viewBox="0 0 18 18"><path d="M1 1h16v12H9l-4 4v-4H1z" fill="#fff"/><path d="M4 4h10M4 7h10M4 10h7" stroke="#111"/></svg><b class="badge">6</b></button>
  </div>
</div>
</body>
</html>
```

FILE: styles.css
```css
:root {
  --ui: "Open Sans", "Noto Sans", sans-serif;
  --page: "DejaVu Sans", Verdana, sans-serif;
}
* { box-sizing: border-box; }
body { margin: 0; height: 100vh; display: flex; flex-direction: column; overflow: hidden; background: #fff; color: #222; font: 11px/14px var(--ui); }
svg { flex: none; display: block; }
.defs { position: absolute; width: 0; height: 0; }
button { border: 0; background: none; padding: 0; margin: 0; font: inherit; color: inherit; }
button, input, select { border-radius: 0; }
p, h1, h2 { margin: 0; font: inherit; }
i { display: block; }
.i16 { width: 16px; height: 16px; }

.paint { flex: 1; min-height: 0; display: flex; flex-direction: column; }
.titlebar { height: 23px; flex: none; display: flex; align-items: center; }
.titlebar .bar { width: 1px; height: 12px; background: #999; margin: 0 10px 0 7px; }
.titlebar .ghost { margin-right: 8px; }
.titlebar .ghost + .bar { margin: 0 7px 0 0; }
.titlebar h1 { font-size: 12px; color: #000; }
.wincontrols { margin-left: auto; display: flex; color: #111; padding-right: 2px; }
.wincontrols button { width: 46px; height: 22px; display: grid; place-items: center; }

.tabs { height: 24px; flex: none; display: flex; align-items: stretch; border-bottom: 1px solid #dadbdc; font-size: 12px; color: #444; }
.tabs .file { width: 56px; background: #1979ca; color: #fff; }
.tabs .home { width: 58px; border: 1px solid #dadbdc; border-bottom: 0; background: #f5f6f7; margin-bottom: -1px; }
.tabs .view { width: 56px; }
.tabs-end { margin-left: auto; display: flex; align-items: center; gap: 12px; padding-right: 4px; }

.ribbon { flex: none; height: 92px; display: flex; background: #f5f6f7; border-bottom: 1px solid #dadbdc; padding: 2px 0; color: #444; }
.group { display: flex; flex-direction: column; border-right: 1px solid #e2e3e4; }
.group h2 { text-align: center; line-height: 14px; margin-top: auto; color: #5a5a5a; }
.gbody { display: flex; justify-content: center; align-items: flex-start; padding-top: 5px; }
.arr { width: 7px; height: 4px; }
.big { display: flex; flex-direction: column; align-items: center; line-height: 13px; }
.big span { margin-top: 3px; }
.big .arr { margin-top: 5px; }
.stack { display: flex; flex-direction: column; margin-top: -3px; }
.stack button { display: flex; align-items: center; gap: 3px; height: 22px; }
.dim { color: #8b8b8b; }
.g-clip { width: 107px; } .g-clip .gbody { justify-content: flex-start; padding-left: 13px; gap: 10px; }
.g-image { width: 122px; } .g-image .gbody { gap: 10px; }
.g-tools { width: 80px; padding-right: 3px; }
.tools { display: grid; grid-template-columns: repeat(3, 24px); grid-auto-rows: 28px; align-items: center; justify-items: center; padding-top: 7px; }
.letter { font: bold 19px/16px "Liberation Serif", serif; color: #22395b; }
.g-brush { width: 57px; padding-right: 2px; }
.g-shapes { width: 246px; } .g-shapes .gbody { justify-content: flex-start; padding-left: 5px; gap: 7px; }
.gallery { display: flex; height: 60px; border: 1px solid #d5d6d8; background: #fbfcfe; }
.shapes { width: 140px; height: 58px; }
.gscroll { width: 14px; border-left: 1px solid #dadbdc; display: flex; flex-direction: column; align-items: center; justify-content: space-around; background: #f5f6f7; }
.g-size { width: 53px; padding-right: 2px; }
.g-colors { width: 357px; padding-right: 3px; } .g-colors .gbody { padding-top: 2px; justify-content: flex-start; padding-left: 4px; }
.color { width: 42px; height: 66px; border: 1px solid transparent; display: flex; flex-direction: column; align-items: center; line-height: 13px; }
.color.sel { background: #c9e0f7; border-color: #62a2e4; }
.color i { border: 1px solid #808080; box-shadow: inset 0 0 0 1px #fff; }
.c1 { width: 32px; height: 32px; margin: 2px 0 3px; background: #000; }
.c2 { width: 24px; height: 24px; margin: 6px 0 7px; background: #fff; }
.pal { display: grid; grid-template-columns: repeat(10, 20px); grid-auto-rows: 20px; gap: 2px; margin: 1px 0 0 1px; }
.pal button { border: 1px solid #a0a0a0; box-shadow: inset 0 0 0 1px #fff; }
.pal button:nth-child(n+21) { box-shadow: none; }
.k1{background:#000}.k2{background:#7f7f7f}.k3{background:#880015}.k4{background:#ed1c24}.k5{background:#ff7f27}.k6{background:#fff200}.k7{background:#22b14c}.k8{background:#00a2e8}.k9{background:#3f48cc}.k10{background:#a349a4}
.k11{background:#fff}.k12{background:#c3c3c3}.k13{background:#b97a57}.k14{background:#ffaec9}.k15{background:#ffc90e}.k16{background:#efe4b0}.k17{background:#b5e61d}.k18{background:#99d9ea}.k19{background:#7092be}.k20{background:#c8bfe7}
.edit { margin: 3px 0 0 6px; }
.g-3d { width: 62px; padding-right: 3px; } .g-alert { width: 56px; padding-right: 3px; }

.work { flex: 1; min-height: 0; display: flex; background: linear-gradient(#c5cfe0, #dbe6f3); }
.shot { flex: 1; min-width: 0; margin: 5px 0 0 5px; display: flex; flex-direction: column; overflow: hidden; background: #fff; }
.fftabs { height: 33px; flex: none; display: flex; background: #20223f; color: #fff; font: 12px/14px Roboto, var(--ui); }
.fftab { width: 225px; display: flex; align-items: center; gap: 7px; padding: 0 13px 0 9px; border-right: 1px solid #5a5c74; white-space: nowrap; }
.fftab button { margin-left: auto; color: #bbb; }
.fftab.on { width: 224px; border-top: 2px solid #0a84ff; border-right: 0; padding-right: 12px; background: #f9f9fa; color: #111; }
.fftab.on button { color: #444; }
.newtab { padding: 0 10px; }
.ffwin { margin-left: auto; display: flex; gap: 36px; align-items: center; margin-right: -4px; }
.ffbar { height: 42px; flex: none; display: flex; align-items: center; gap: 15px; background: #f9f9fa; border-bottom: 1px solid #a5a5a5; padding-left: 3px; overflow: hidden; }
.back { width: 34px; height: 34px; border: 1px solid #b5b5b5; border-radius: 50%; display: grid; place-items: center; margin-right: -8px; background: #fff; }
.url { flex: 1; height: 30px; margin-left: 110px; border: 1px solid #bbb; background: #fff; display: flex; align-items: center; gap: 12px; padding: 0 7px 0 8px; }
.url svg:nth-child(2) { margin-left: -7px; }
.url a { flex: 1; margin-left: -3px; font-size: 13px; color: #111; text-decoration: none; }
.url a span { color: #808080; }
.fftools { display: flex; align-items: center; gap: 16px; margin-left: 109px; }
.fftools .sep { width: 1px; height: 34px; background: #ddd; margin-left: -4px; }
.fftools .menu { margin-left: -4px; }

.userbar, .appnav, .app { font-family: var(--page); }
.userbar { height: 16px; flex: none; display: flex; justify-content: flex-end; gap: 6px; background: #ebdfdf; color: #000; font-size: 10px; line-height: 14px; margin-right: -9px; }
.agent { font-weight: bold; color: #00e; margin-right: 2px; }
.logout { color: #551a8b; }
.appnav { height: 69px; flex: none; display: flex; border-top: 1px solid #fff; border-bottom: 1px solid #fff; background: linear-gradient(#ecd9d9, #efa0a3 55%, #f0707a); padding-left: 1px; }
.appnav a { width: 94px; padding: 3px 14px 0; display: flex; flex-direction: column; align-items: center; text-align: center; font-weight: bold; font-size: 11px; line-height: 13px; color: #000; text-decoration: none; white-space: nowrap; }
.appnav a:nth-child(5) { white-space: normal; }
.appnav svg { width: 28px; height: 28px; margin-bottom: 2px; }
.cal { font: bold 10px var(--page); }
.dollar { font: bold 18px var(--page); }
.app { flex: 1; min-height: 0; display: flex; border-top: 2px solid #111; margin-top: 3px; color: #000; }

.side { width: 236px; flex: none; border-right: 2px solid #000; font-size: 11px; }
.filters { display: flex; height: 90px; }
.fbox { flex: 1; min-width: 0; }
.fbox .frow { background: #ccc; display: flex; justify-content: center; height: 19px; gap: 4px; padding-top: 2px; }
.fbox .frow + .frow { height: 20px; justify-content: flex-start; padding: 0 0 0 29px; }
.selwrap { position: relative; display: block; }
.selwrap svg { position: absolute; right: 4px; top: 7px; pointer-events: none; }
select { appearance: none; display: block; font: 12px/15px var(--page); color: #000; background: #fff; border: 1px solid #707070; padding: 0 16px 0 4px; height: 17px; }
.s1 { width: 60px; } .s2 { width: 115px; }
.fdate { width: 121px; height: 19px; border: 1px solid #666; font: 12px var(--page); padding: 0 2px; }
.go { width: 27px; height: 17px; margin: 1px 0 0 6px; border: 1px solid #aaa; background: #ddd; font-weight: bold; overflow: hidden; padding-left: 8px; }
.lists { display: flex; width: 216px; padding: 9px 0 0 2px; font: bold 11px/14px var(--ui); color: #000; align-items: flex-start; }
.lists button { border: 1px solid #000; border-radius: 7px; background: #fff; white-space: nowrap; padding-bottom: 2px; }
.l1 { width: 63px; height: 24px; margin-right: 10px; } .l2 { width: 71px; height: 26px; margin-right: 7px; } .l3 { width: 62px; height: 24px; }
.lists .l2 { margin-top: 1px; padding-left: 6px; } .lists .l3 { margin-top: 5px; }
.fscroll { width: 15px; margin-right: 6px; background: #f0f0f0; display: flex; flex-direction: column; align-items: center; padding: 6px 0; }
.fscroll i { width: 15px; height: 19px; background: #cdcdcd; margin-top: 5px; }
.fscroll .end { margin-top: auto; }
.side p { padding: 0 0 0 10px; line-height: 14px; font-size: 11px; }
.names { margin: 10px 4px 0 11px; overflow: hidden; }
.names table { table-layout: fixed; width: 260px; border-spacing: 0; margin: 0; }
.names th { background: #808080; color: #fff; font-size: 12px; line-height: 15px; text-align: left; padding: 0; border-right: 2px solid #fff; }
.names .n1 { width: 112px; } .names .n2 { width: 87px; }
.names .n1, .names .n3 { font-weight: normal; font-size: 13px; }

main { flex: 1; min-width: 0; overflow: hidden; padding: 15px 0 0 10px; }
.ctl { display: flex; align-items: center; gap: 16px; height: 17px; padding-left: 5px; font-size: 11px; }
.ctl.two { margin: 11px 0 15px; height: 18px; gap: 4px; }
.ctl button { height: 17px; padding: 0 8px; background: #e1e1e1; border: solid #f0f0f0; border-width: 1px 2px 2px 1px; border-right-color: #999; border-bottom-color: #999; font: bold 12px/14px var(--page); }
.ctl input, .city select { background: #f4f4f4; border: solid #a5a5ab; border-width: 2px 0 0 2px; height: 16px; font: 11px var(--page); padding: 0 1px; }
.day { width: 84px; }
.pc { width: 49px; }
.lc { margin-left: 9px; }
.city select { width: 149px; height: 18px; }
.city svg { right: 1px; top: 2px; width: 16px; height: 15px; padding: 4px 3px; background: #ddd; border: 1px solid #aaa; }
.ctl .air { margin: 0 12px 0 25px; }

.sched { table-layout: fixed; width: 1143px; border-spacing: 0; font-size: 10px; }
.sched .ct { width: 73px; } .sched .cr { width: 83px; }
.sched td, .sched th { padding: 0; }
.sched thead tr { height: 20px; }
.sched thead td { background: #ccc; }
.sched thead th { background: #eee; color: #600000; border-left: 1px solid #444; border-top: 1px solid #ccc; border-bottom: 1px solid #ccc; padding-left: 2px; }
.sched tbody tr { height: 51px; }
.sched tbody th { background: #ccc; text-align: left; vertical-align: top; padding: 3px 0 0 4px; }
.sched tbody td { border-right: 1px solid #ccc; border-bottom: 1px solid #ccc; }
.sched .add svg { width: 14px; height: 14px; margin: 0 auto; }
.sched .rt { vertical-align: top; padding: 3px 3px 0 3px; background: repeating-linear-gradient(transparent 0 50px, #ccc 50px 51px); }
.sched .r1 { padding-right: 0; }
.card { background: #e9e9e9; border: 1px solid #666; border-bottom: 0; line-height: 12px; font-size: 11px; white-space: nowrap; }
.card + .card { margin-top: -1px; }
.card.last { border-top: 0; border-bottom: 1px solid #666; padding-bottom: 2px; }
.card.red { border: 3px solid #a50007; position: relative; }
.hd { height: 16px; display: flex; align-items: center; justify-content: space-between; padding-right: 15px; overflow: hidden; }
.red .hd { padding-right: 12px; }
.hd.cut { height: 4px; align-items: flex-end; }
.dot { width: 12px; height: 12px; } .note { width: 14px; height: 15px; }
.mag { background: #b3218d; } .crim { background: #d0202c; } .navy { background: #0f4c66; } .teal { background: #16a0b5; } .orange { background: #f47b24; }
.card .c { display: flex; justify-content: center; text-decoration: underline; line-height: 11px; font-size: 11px; }
.pcode { display: flex; height: 14px; line-height: 14px; padding-left: 3px; }
.pcode a { color: #00e; }
.gl { width: 15px; height: 15px; }
.pcode.wrap { display: block; height: 27px; line-height: 13px; }
.wrap .gl { display: inline-block; height: 14px; vertical-align: top; }
.card em { display: block; line-height: 14px; padding-left: 3px; color: #808080; font-size: 10px; }
.card .in { padding-left: 3px; }
.long { height: 456px; }
.long .hd { height: 98px; padding-right: 11px; }
.long .c { margin-top: 28px; }
.long .pcode { margin-top: 68px; }
.long em { margin-top: 69px; }
.long p { margin-top: 61px; }

.vscroll { width: 17px; flex: none; background: #f0f0f0; display: flex; flex-direction: column; align-items: center; padding: 7px 0 5px; }
.vscroll i { width: 15px; flex: 1; max-height: 479px; background: #cdcdcd; margin-top: 5px; }
.vscroll .end { margin-top: auto; }
.hscroll { height: 17px; flex: none; background: #f0f0f0; display: flex; align-items: center; padding: 0 22px 0 5px; }
.hscroll i { flex: 1; height: 15px; margin: 0 33px 0 6px; background: #cdcdcd; }

.status { height: 26px; flex: none; display: flex; background: #f0f0f0; border-top: 1px solid #d7d7d7; font-size: 11px; color: #111; }
.status > div { width: 156px; display: flex; align-items: center; gap: 7px; padding-left: 5px; border-right: 1px solid #d7d7d7; }
.status .zoom { width: 218px; margin-left: auto; border-left: 1px solid #d7d7d7; border-right: 0; padding-left: 21px; gap: 7px; }
.zoom button { width: 16px; height: 16px; border: 1px solid #777; border-radius: 50%; display: grid; place-items: center; background: #fafafa; }
.zoom input { appearance: none; width: 86px; height: 16px; margin: 0 3px; background: linear-gradient(#d9dcdc, #d9dcdc) center / 100% 4px no-repeat; }
.zoom input::-webkit-slider-thumb { appearance: none; width: 10px; height: 16px; background: #0078d7; clip-path: polygon(0 0, 100% 0, 100% 75%, 50% 100%, 0 75%); }

.taskbar { height: 40px; flex: none; display: flex; background: #050c14; color: #fff; }
.start { width: 48px; display: grid; place-items: center; }
.search { width: 344px; background: #f2f2f2; display: flex; align-items: center; padding: 0 14px 0 9px; gap: 9px; border-top: 1px solid #ccc; }
.search input { flex: 1; min-width: 0; border: 0; background: none; font: 14px var(--ui); padding: 0; }
.search input::placeholder { color: #444; opacity: 1; }
.apps { display: flex; }
.apps button { width: 49px; display: grid; place-items: center; position: relative; }
.apps .run { background: linear-gradient(#76b9ed, #76b9ed) center bottom / 40px 2px no-repeat; }
.apps .cur { background-color: #3c4147; background-size: 49px 2px; }
.badge { position: absolute; right: 3px; bottom: 5px; width: 16px; height: 16px; border: 1px solid #999; border-radius: 50%; background: #2a2f35; font: bold 10px/14px var(--ui); text-align: center; }
.tray { margin-left: auto; display: flex; align-items: center; gap: 8px; padding-right: 3px; }
.tray .ppl { margin-right: 12px; }
.clock { width: 60px; margin-left: -1px; text-align: center; display: flex; flex-direction: column; font-size: 11px; line-height: 18px; white-space: nowrap; }
.action { position: relative; width: 48px; height: 40px; padding-right: 10px; border-right: 1px solid #555; display: grid; place-items: center; }
.action .badge { right: 13px; bottom: 4px; }
```
